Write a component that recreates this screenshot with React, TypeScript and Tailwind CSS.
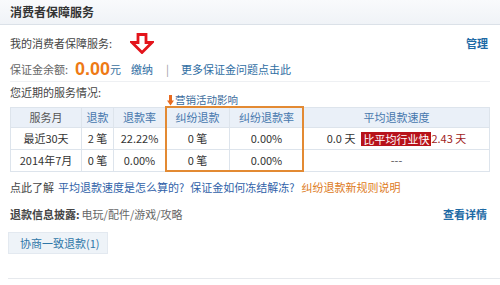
import React from 'react';

const font = { fontFamily: '"Noto Sans CJK SC", "Liberation Sans", sans-serif' };

function RedArrow() {
  return (
    <svg width="24" height="21" viewBox="0 0 24 21" className="block">
      <path
        d="M8 1.5 H16 V9.5 H22 L12 19.5 L2 9.5 H8 Z"
        fill="#fff"
        stroke="#e3141b"
        strokeWidth="2.8"
        strokeLinejoin="miter"
      />
    </svg>
  );
}

function SmallArrow() {
  return (
    <svg width="7" height="11" viewBox="0 0 7 11" className="block">
      <rect x="2" y="0" width="3" height="6" fill="#e86a1f" />
      <path d="M0 5.5 H7 L3.5 10.5 Z" fill="#e86a1f" />
    </svg>
  );
}

const rows = [
  { month: '最近30天', refund: '2 笔', rate: '22.22%', dispute: '0 笔', drate: '0.00%', speed: true },
  { month: '2014年7月', refund: '0 笔', rate: '0.00%', dispute: '0 笔', drate: '0.00%', speed: false },
];

export default function App() {
  return (
    <div className="w-[500px] h-[285px] bg-white text-[11px] text-[#333] overflow-hidden" style={font}>
      <div className="h-[25px] bg-gradient-to-b from-[#f9fafc] to-[#f0f3f7] border-b border-[#dbe1e8] flex items-center px-[10px]">
        <span className="font-bold text-[12px] text-[#333]">消费者保障服务</span>
      </div>

      <div className="px-[10px]">
        <div className="h-[18px] mt-[9px] flex items-center justify-between">
          <span className="text-[#444]">我的消费者保障服务:</span>
          <span className="font-bold text-[#1d6aa5] mr-[2px]">管理</span>
        </div>

        <div className="h-[18px] mt-[8px] flex items-center relative">
          <span className="text-[#666]">保证金余额:</span>
          <span className="ml-[7px] text-[18px] font-bold text-[#ee7a14] leading-[18px]" style={{ fontFamily: '"Liberation Sans", sans-serif' }}>
            0.00
          </span>
          <span className="text-[#3a6f9e]">元</span>
          <span className="ml-[10px] text-[#2f6ea3] relative">
            缴纳
            <span className="absolute left-[-1px] top-[-28px]">
              <RedArrow />
            </span>
          </span>
          <span className="ml-[13px] text-[#999]">|</span>
          <span className="ml-[12px] text-[#2f6ea3]">更多保证金问题点击此</span>
        </div>

        <div className="mt-[3px] border-t border-[#eef0f3]" />

        <div className="flex h-[22px] mt-[3px]">
          <div className="w-[157px] shrink-0 leading-[14px] text-[#444]">您近期的服务情况:</div>
          <div className="self-end flex items-center gap-[1px] h-[12px] mb-[1px] text-[10.5px] text-[#3b6c9c]">
            <SmallArrow />
            <span>营销活动影响</span>
          </div>
        </div>

        <div className="relative">
          <table className="w-[480px] border-collapse table-fixed text-center">
            <colgroup>
              <col className="w-[71px]" />
              <col className="w-[32px]" />
              <col className="w-[52px]" />
              <col className="w-[64px]" />
              <col className="w-[74px]" />
              <col />
            </colgroup>
            <thead>
              <tr className="h-[20px] bg-[#eaf0f8]">
                <th className="border border-[#dde4ec] font-normal text-[#555]">服务月</th>
                <th className="border border-[#dde4ec] font-normal text-[#4677ad]">退款</th>
                <th className="border border-[#dde4ec] font-normal text-[#4677ad]">退款率</th>
                <th className="border border-[#dde4ec] font-normal text-[#4677ad]">纠纷退款</th>
                <th className="border border-[#dde4ec] font-normal text-[#4677ad]">纠纷退款率</th>
                <th className="border border-[#dde4ec] font-normal text-[#4677ad]">平均退款速度</th>
              </tr>
            </thead>
            <tbody>
              {rows.map((r) => (
                <tr key={r.month} className="h-[22px] text-[#333]">
                  <td className="border border-[#dde4ec]">{r.month}</td>
                  <td className="border border-[#dde4ec]">{r.refund}</td>
                  <td className="border border-[#dde4ec]">{r.rate}</td>
                  <td className="border border-[#dde4ec]">{r.dispute}</td>
                  <td className="border border-[#dde4ec]">{r.drate}</td>
                  <td className="border border-[#dde4ec]">
                    {r.speed ? (
                      <span className="inline-flex items-center">
                        <span>0.0 天</span>
                        <span className="ml-[6px] bg-[#b7121a] text-white px-[2px] leading-[14px]">比平均行业快</span>
                        <span className="text-[#a01c1c]">2.43 天</span>
                      </span>
                    ) : (
                      <span className="text-[#555]">---</span>
                    )}
                  </td>
                </tr>
              ))}
            </tbody>
          </table>
          <div className="absolute left-[155px] top-[-1px] w-[139px] h-[66px] border-2 border-[#e38a33] pointer-events-none" />
        </div>

        <div className="h-[14px] mt-[8px] flex items-center">
          <span className="text-[#444]">点此了解</span>
          <span className="ml-[4px] text-[#2f5fa8]">平均退款速度是怎么算的?</span>
          <span className="ml-[6px] text-[#2f5fa8]">保证金如何冻结解冻?</span>
          <span className="ml-[7px] text-[#dd7a22]">纠纷退款新规则说明</span>
        </div>

        <div className="h-[14px] mt-[13px] flex items-center justify-between">
          <div className="flex items-center">
            <span className="font-bold text-[#444]">退款信息披露:</span>
            <span className="ml-[2px] text-[#666]">电玩/配件/游戏/攻略</span>
          </div>
          <span className="font-bold text-[#1d6aa5] mr-[3px]">查看详情</span>
        </div>

        <div className="mt-[11px] -ml-[2px] w-[100px] h-[22px] bg-[#eef3f8] border border-[#e3e9f0] flex items-center pl-[11px] text-[#2f77a8]">
          协商一致退款(1)
        </div>
      </div>

      <div className="mt-[24px] ml-[8px] border-t border-[#e6e9ed]" />
    </div>
  );
}
